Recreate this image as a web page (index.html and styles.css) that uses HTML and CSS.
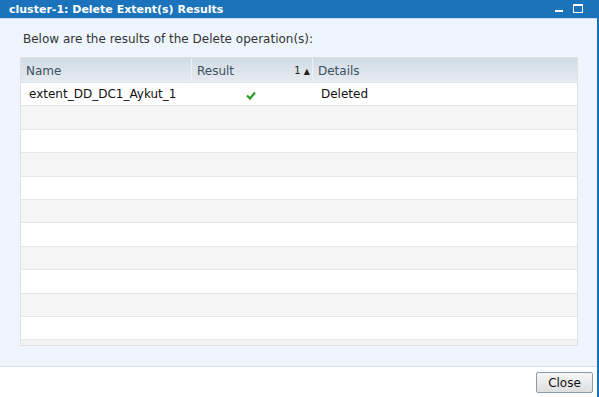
FILE: index.html
```html
<!DOCTYPE html>
<html lang="en">
<head>
  <meta charset="UTF-8">
  <title>cluster-1: Delete Extent(s) Results</title>
  <link rel="stylesheet" href="styles.css">
</head>
<body>
  <div class="window">
    <div class="titlebar">
      <span class="title">cluster-1: Delete Extent(s) Results</span>
      <div class="tools">
        <svg class="tool" width="10" height="12" viewBox="0 0 10 12">
          <rect x="1" y="7" width="8" height="2" fill="#fff"/>
        </svg>
        <svg class="tool" width="12" height="12" viewBox="0 0 12 12">
          <rect x="1.5" y="1.5" width="9" height="8" fill="none" stroke="#fff"/>
          <rect x="1" y="1" width="10" height="2" fill="#fff"/>
        </svg>
      </div>
    </div>

    <div class="content">
      <p class="intro">Below are the results of the Delete operation(s):</p>
      <div class="grid">
        <div class="grid-head">
          <div class="hcell">Name</div>
          <div class="hcell sorted">Result <span class="sort">1 <span class="arrow">&#9650;</span></span></div>
          <div class="hcell">Details</div>
        </div>
        <div class="grid-body">
          <div class="row">
            <div class="cell">extent_DD_DC1_Aykut_1</div>
            <div class="cell center">
              <svg width="10" height="9" viewBox="0 0 10 9">
                <path d="M1 4.5 L4 7.5 L9 1.5" fill="none" stroke="#2a9a2a" stroke-width="2.2"/>
              </svg>
            </div>
            <div class="cell">Deleted</div>
          </div>
          <div class="row alt"></div>
          <div class="row"></div>
          <div class="row alt"></div>
          <div class="row"></div>
          <div class="row alt"></div>
          <div class="row"></div>
          <div class="row alt"></div>
          <div class="row"></div>
          <div class="row alt"></div>
          <div class="row"></div>
        </div>
        <div class="scroll-strip"></div>
      </div>
    </div>

    <div class="footer">
      <button class="close-btn">Close</button>
    </div>
  </div>
</body>
</html>
```

FILE: styles.css
```css
body {
  margin: 0;
  padding: 0;
  font-family: "DejaVu Sans", Verdana, sans-serif;
  background: #fff;
}

.window {
  width: 597px;
  height: 397px;
  border-right: 2px solid #1a72bb;
  display: flex;
  flex-direction: column;
}

.titlebar {
  height: 18px;
  background: #1a73bb;
  display: flex;
  align-items: center;
  justify-content: space-between;
  padding: 0 13px 0 9px;
}

.title {
  color: #fff;
  font-weight: bold;
  font-size: 11px;
}

.tools {
  display: flex;
  align-items: center;
  gap: 8px;
}

.tool {
  display: block;
}

.content {
  flex: 1;
  background: #eef5fe;
  border-top: 1px solid #c6d9ef;
  border-bottom: 1px solid #d3dfec;
  padding: 0 20px 0 20px;
}

.intro {
  margin: 13px 0 0 3px;
  font-size: 12px;
  color: #333;
  height: 25px;
}

.grid {
  width: 556px;
  border: 1px solid #e0e0e0;
  background: #fff;
}

.grid-head {
  display: grid;
  grid-template-columns: 171px 121px 1fr;
  height: 24px;
  background: linear-gradient(#d1dbe5, #e7ebf0);
  border-bottom: 1px solid #e2e6ea;
}

.hcell {
  font-size: 12px;
  color: #3d5060;
  padding: 6px 0 0 5px;
  border-right: 1px solid #edf1f5;
  position: relative;
}

.hcell:last-child {
  border-right: none;
}

.sort {
  position: absolute;
  right: 2px;
  top: 7px;
  font-size: 10px;
  color: #222;
}

.arrow {
  font-size: 8px;
}

.row {
  display: grid;
  grid-template-columns: 171px 121px 1fr;
  height: 22.4px;
  border-bottom: 1px solid #e6e6e6;
  background: #fff;
}

.row.alt {
  background: #f5f5f5;
}

.cell {
  font-size: 12px;
  color: #111;
  padding: 4px 0 0 8px;
}

.cell.center {
  text-align: center;
  padding: 6px 4px 0 0;
}

.scroll-strip {
  height: 5px;
  background: #f3f3f3;
}

.footer {
  height: 30px;
  display: flex;
  justify-content: flex-end;
  align-items: flex-start;
  padding: 0 4px 0 0;
}

.close-btn {
  margin-top: 5px;
  width: 57px;
  height: 21px;
  font-family: "DejaVu Sans", Verdana, sans-serif;
  font-size: 12px;
  color: #111;
  background: linear-gradient(#f6f6f6, #dedede);
  border: 1px solid #8e9ba8;
  border-radius: 2px;
  padding: 0;
}
```
